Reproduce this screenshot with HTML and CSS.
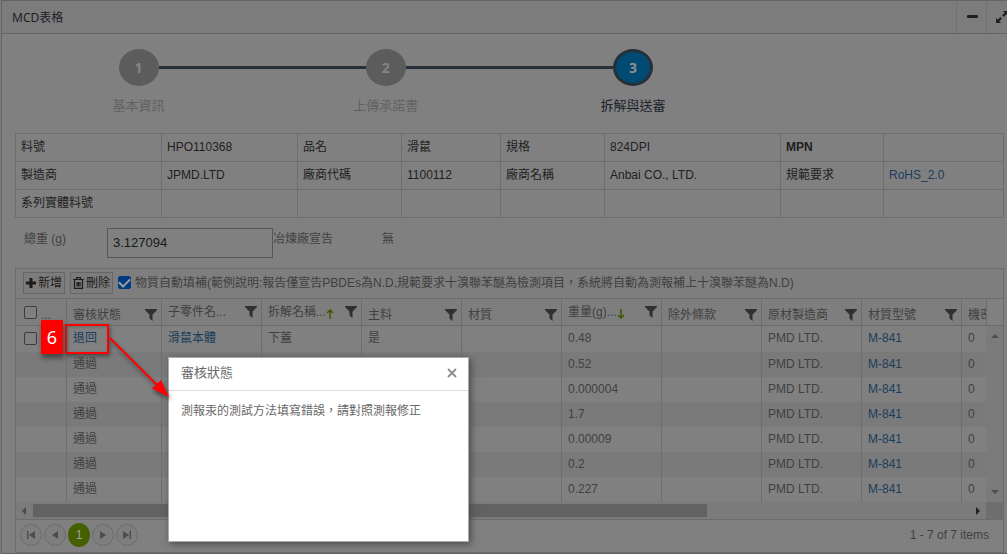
FILE: index.html
```html
<!DOCTYPE html>
<html lang="zh-Hant">
<head>
<meta charset="utf-8">
<title>MCD表格</title>
<link rel="stylesheet" href="styles.css">
</head>
<body>
<svg class="defs" width="0" height="0" aria-hidden="true">
  <symbol id="filter" viewBox="0 0 12 12"><path d="M0 0h12v1L7.500 5.500V12L4.500 9.500v-4L0 1z"/></symbol>
</svg>
<main class="panel">
  <header class="panel-head">
    <h1 class="panel-title">MCD表格</h1>
    <button class="tool" type="button" aria-label="收合"><svg width="12" height="12" viewBox="0 0 12 12"><rect x="1" y="4" width="11" height="3" rx="1"/></svg></button>
    <button class="tool" type="button" aria-label="展開"><svg width="12" height="12" viewBox="0 0 12 12"><path d="M7 0h5v5l-1.700-1.700L7.700 5.900 6.100 4.300l2.600-2.600zM0 12V7l1.700 1.700 2.600-2.600 1.600 1.600-2.600 2.600L5 12z"/></svg></button>
  </header>
  <div class="content">
    <ol class="steps">
      <li class="step"><span class="dot">1</span><span class="step-name">基本資訊</span></li>
      <li class="step"><span class="dot">2</span><span class="step-name">上傳承諾書</span></li>
      <li class="step current"><span class="dot">3</span><span class="step-name">拆解與送審</span></li>
    </ol>
    <table class="info">
      <colgroup><col class="i1"><col class="i2"><col class="i3"><col class="i4"><col class="i5"><col class="i6"><col class="i7"><col class="i8"></colgroup>
      <tr><th>料號</th><td>HPO110368</td><th>品名</th><td>滑鼠</td><th>規格</th><td>824DPI</td><th class="strong">MPN</th><td></td></tr>
      <tr><th>製造商</th><td>JPMD.LTD</td><th>廠商代碼</th><td>1100112</td><th>廠商名稱</th><td>Anbai CO., LTD.</td><th>規範要求</th><td><a href="#">RoHS_2.0</a></td></tr>
      <tr><th>系列實體料號</th><td></td><td></td><td></td><td></td><td></td><td></td><td></td></tr>
    </table>
    <div class="weight">
      <label class="weight-label" for="weight">總重 (g)</label>
      <input class="weight-input" id="weight" type="text" value="3.127094">
      <span class="smelter">冶煉廠宣告</span>
      <span class="smelter-value">無</span>
    </div>
    <section class="grid">
      <div class="toolbar">
        <button class="btn" type="button"><svg width="10" height="10" viewBox="0 0 10 10"><path d="M3.500 0h3v3.500H10v3H6.500V10h-3V6.500H0v-3h3.500z"/></svg>新增</button>
        <button class="btn" type="button"><svg width="11" height="12" viewBox="0 0 11 12"><path d="M0 2.500h11M3.500 2V.7h4V2M1.500 3v8.300h8V3M4 5v4.500M5.500 5v4.500M7 5v4.500" fill="none" stroke="currentColor" stroke-width="1.200"/></svg>刪除</button>
        <input class="check" id="autofill" type="checkbox" checked>
        <label class="autofill" for="autofill">物質自動填補(範例說明:報告僅宣告PBDEs為N.D,規範要求十溴聯苯醚為檢測項目，系統將自動為測報補上十溴聯苯醚為N.D)</label>
      </div>
      <div class="viewport">
        <div class="clip">
          <table class="rows">
            <colgroup><col class="c-check"><col class="c-state"><col span="9" class="c-std"></colgroup>
            <thead>
              <tr>
                <th class="pick"><span class="cell"><input class="check" type="checkbox" aria-label="全選"><span class="dots">...</span></span></th>
                <th><span class="cell">審核狀態<svg class="funnel"><use href="#filter"/></svg></span></th>
                <th><span class="cell raised">子零件名...<svg class="funnel"><use href="#filter"/></svg></span></th>
                <th><span class="cell raised">拆解名稱...<svg class="sort" width="8" height="10" viewBox="0 0 8 10"><path d="M4 1v9M1 4l3-3 3 3"/></svg><svg class="funnel"><use href="#filter"/></svg></span></th>
                <th><span class="cell">主料<svg class="funnel"><use href="#filter"/></svg></span></th>
                <th><span class="cell">材質<svg class="funnel"><use href="#filter"/></svg></span></th>
                <th><span class="cell raised">重量(g)...<svg class="sort" width="8" height="10" viewBox="0 0 8 10"><path d="M4 0v9M1 6l3 3 3-3"/></svg><svg class="funnel"><use href="#filter"/></svg></span></th>
                <th><span class="cell">除外條款<svg class="funnel"><use href="#filter"/></svg></span></th>
                <th><span class="cell">原材製造商<svg class="funnel"><use href="#filter"/></svg></span></th>
                <th><span class="cell">材質型號<svg class="funnel"><use href="#filter"/></svg></span></th>
                <th><span class="cell">機密</span></th>
              </tr>
            </thead>
            <tbody>
              <tr><td class="pick"><input class="check" type="checkbox" aria-label="選取"></td><td><a href="#">退回</a></td><td><a href="#">滑鼠本體</a></td><td>下蓋</td><td>是</td><td></td><td>0.48</td><td></td><td>PMD LTD.</td><td><a href="#">M-841</a></td><td>0</td></tr>
              <tr><td></td><td>通過</td><td></td><td></td><td></td><td></td><td>0.52</td><td></td><td>PMD LTD.</td><td><a href="#">M-841</a></td><td>0</td></tr>
              <tr><td></td><td>通過</td><td></td><td></td><td></td><td></td><td>0.000004</td><td></td><td>PMD LTD.</td><td><a href="#">M-841</a></td><td>0</td></tr>
              <tr><td></td><td>通過</td><td></td><td></td><td></td><td></td><td>1.7</td><td></td><td>PMD LTD.</td><td><a href="#">M-841</a></td><td>0</td></tr>
              <tr><td></td><td>通過</td><td></td><td></td><td></td><td></td><td>0.00009</td><td></td><td>PMD LTD.</td><td><a href="#">M-841</a></td><td>0</td></tr>
              <tr><td></td><td>通過</td><td></td><td></td><td></td><td></td><td>0.2</td><td></td><td>PMD LTD.</td><td><a href="#">M-841</a></td><td>0</td></tr>
              <tr><td></td><td>通過</td><td></td><td></td><td></td><td></td><td>0.227</td><td></td><td>PMD LTD.</td><td><a href="#">M-841</a></td><td>0</td></tr>
            </tbody>
          </table>
        </div>
        <div class="vbar">
          <div class="vbar-top"></div>
          <div class="vbar-track">
            <svg width="8" height="4" viewBox="0 0 8 4"><path d="M0 4l4-4 4 4z"/></svg>
            <svg width="8" height="4" viewBox="0 0 8 4"><path d="M0 0l4 4 4-4z"/></svg>
          </div>
        </div>
        <div class="hbar">
          <svg width="4" height="8" viewBox="0 0 4 8"><path d="M4 0L0 4l4 4z"/></svg>
          <div class="hbar-track"><div class="thumb"></div></div>
          <svg class="dark" width="4" height="8" viewBox="0 0 4 8"><path d="M0 0l4 4-4 4z"/></svg>
        </div>
        <div class="corner"></div>
      </div>
      <footer class="pager">
        <button class="page" type="button" aria-label="第一頁"><svg width="8" height="8" viewBox="0 0 8 8"><path d="M0 0h1.500v8H0zM8 0v8L2 4z"/></svg></button>
        <button class="page" type="button" aria-label="上一頁"><svg width="8" height="8" viewBox="0 0 8 8"><path d="M7 0v8L1 4z"/></svg></button>
        <button class="page active" type="button">1</button>
        <button class="page" type="button" aria-label="下一頁"><svg width="8" height="8" viewBox="0 0 8 8"><path d="M1 0v8l6-4z"/></svg></button>
        <button class="page" type="button" aria-label="最後一頁"><svg width="8" height="8" viewBox="0 0 8 8"><path d="M6.500 0H8v8H6.500zM0 0v8l6-4z"/></svg></button>
        <span class="count">1 - 7 of 7 items</span>
      </footer>
    </section>
  </div>
</main>
<section class="modal" role="dialog" aria-labelledby="modal-title">
  <header class="modal-head">
    <h2 class="modal-title" id="modal-title">審核狀態</h2>
    <button class="close" type="button" aria-label="關閉"><svg width="10" height="10" viewBox="0 0 10 10"><path d="M1 1l8 8M9 1L1 9"/></svg></button>
  </header>
  <p class="modal-text">測報汞的測試方法填寫錯誤，請對照測報修正</p>
</section>
<div class="mark-box"></div>
<div class="mark-number">6</div>
<svg class="mark-arrow" width="70" height="70" viewBox="0 0 70 70"><path d="M4 6L52 54" fill="none" stroke="#f00" stroke-width="2"/><path d="M63 65L46 56.500 55 48z" fill="#f00"/></svg>
</body>
</html>
```
FILE: styles.css
```css
* { box-sizing: border-box; }
body {
  margin: 0;
  height: 100vh;
  overflow: hidden;
  background: #7c7c7c;
  color: #404040;
  font: 12px/16px "Liberation Sans", "Noto Sans CJK TC", sans-serif;
}
a { color: #1a3d5c; text-decoration: none; }
button, input { font: inherit; color: inherit; margin: 0; }
svg { flex: none; fill: currentColor; }
.defs { position: absolute; }

.panel {
  margin: 0 -10px 0 1px;
  min-height: 100vh;
  border: 1px solid #646464;
  background: #808080;
}
.panel-head {
  display: flex;
  height: 33px;
  border-bottom: 1px solid #646464;
  background: #7c7c7c;
  color: #1c2024;
}
.panel-title {
  flex: 1;
  margin: 0;
  padding-left: 10px;
  font: 12px/34px "Noto Sans", "Noto Sans CJK TC", sans-serif;
}
.tool {
  width: 30px;
  padding: 0;
  border: 0;
  border-left: 1px solid #727272;
  background: none;
  display: flex;
  align-items: center;
  justify-content: center;
}
.content { padding: 15px 12px 0 13px; }

.steps {
  display: grid;
  grid-template-columns: repeat(4, 1fr);
  margin: 0 0 19px;
  padding: 0;
  list-style: none;
}
.step {
  display: grid;
  grid-template-columns: 1fr 40px 1fr;
  align-items: center;
  row-gap: 12px;
  color: #626262;
}
.step::before, .step::after { content: ""; height: 3px; background: #272f38; grid-row: 1; }
.step::before { grid-column: 1; }
.step::after { grid-column: 3; }
.step:first-child::before, .current::after { visibility: hidden; }
.dot {
  grid-area: 1 / 2;
  height: 37px;
  border-radius: 50%;
  background: #5c5c5c;
  color: #858585;
  font: bold 14px/37px "Open Sans", sans-serif;
  text-align: center;
}
.step-name {
  grid-area: 2 / 1 / 3 / 4;
  text-align: center;
  font-size: 13px;
}
.current { color: #1c232c; }
.current .dot { border: 3px solid #272f38; background: #004a74; color: #909090; line-height: 31px; }

.info { width: 100%; border-collapse: collapse; table-layout: fixed; color: #202020; }
.info th, .info td {
  height: 28px;
  padding: 0 5px 2px;
  border: 1px solid #6e6e6e;
  text-align: left;
  font-weight: normal;
}
.info .strong { font-weight: bold; }
.i1 { width: 146px; }
.i2 { width: 136px; }
.i3 { width: 104px; }
.i4 { width: 99px; }
.i5 { width: 104px; }
.i6 { width: 176px; }
.i7 { width: 103px; }

.weight { display: flex; padding: 10px 0 10px 9px; }
.weight-label { width: 83px; padding-top: 3px; }
.weight-input {
  width: 166px;
  height: 30px;
  padding: 0 5px 2px;
  border: 1px solid #565656;
  background: #808080;
  color: #181818;
  font-size: 13px;
}
.smelter { width: 109px; padding-top: 3px; }
.smelter-value { padding-top: 3px; }

.grid { border: 1px solid #6c6c6c; }
.toolbar { display: flex; height: 29px; padding: 0 7px 2px; align-items: center; background: #7e7e7e; }
.btn {
  display: flex;
  align-items: center;
  gap: 2px;
  height: 22px;
  margin-right: 5px;
  padding: 0 2px;
  border: 1px solid #666;
  background: #7c7c7c;
  color: #1c1c1c;
}
.check {
  appearance: none;
  flex: none;
  width: 13px;
  height: 13px;
  border: 1px solid #3c3c3c;
  border-radius: 2px;
  background: #808080;
}
.check:checked {
  border-color: #003b80;
  background: #003b80;
  display: grid;
  place-items: center;
}
.check:checked::before {
  content: "";
  width: 9px;
  height: 5px;
  margin-bottom: 3px;
  border: solid #a0a0a0;
  border-width: 0 0 2px 2px;
  rotate: -45deg;
}
.autofill { padding-left: 4px; white-space: nowrap; }

.viewport { display: grid; grid-template-columns: minmax(0, 1fr) 17px; }
.clip { overflow: hidden; border-top: 1px solid #6c6c6c; }
.rows { width: 1046px; table-layout: fixed; border-collapse: separate; border-spacing: 0; }
.c-check { width: 51px; }
.c-state { width: 95px; }
.c-std { width: 100px; }
.rows th {
  height: 27px;
  padding: 0 4px 0 6px;
  border-right: 1px solid #6c6c6c;
  border-bottom: 1px solid #6c6c6c;
  background: #7e7e7e;
  font-weight: normal;
  text-align: left;
  white-space: nowrap;
}
.rows td { height: 25px; padding: 0 6px 1px; border-right: 1px solid #6e6e6e; line-height: 16px; }
.rows tbody tr:first-child td { height: 26px; padding-bottom: 2px; }
.rows tbody tr:nth-child(even) { background: #7a7a7a; }
.rows .pick { padding: 0 8px; }
.rows td .check { display: block; }
.cell { display: flex; align-items: center; padding-top: 5px; }
.raised { padding: 0; }
.pick .cell { padding: 0; gap: 4px; }
.dots { padding-top: 6px; }
.funnel { width: 12px; height: 12px; margin-left: auto; color: #303030; }
.sort { margin-top: 4px; fill: none; stroke: #3f5700; stroke-width: 1.500; }

.vbar { display: flex; flex-direction: column; border-top: 1px solid #6c6c6c; }
.vbar-top { height: 27px; border-left: 1px solid #6c6c6c; border-bottom: 1px solid #6c6c6c; }
.vbar-track {
  flex: 1;
  display: flex;
  flex-direction: column;
  justify-content: space-between;
  align-items: center;
  padding: 8px 0;
  background: #7b7b7b;
  color: #505050;
}
.hbar { display: flex; align-items: center; gap: 7px; height: 17px; padding: 0 6px; background: #7b7b7b; color: #484848; }
.hbar-track { flex: 1; }
.thumb { width: 72%; height: 13px; background: #626262; }
.dark { color: #202020; }
.corner { background: #6e6e6e; }

.pager { display: flex; align-items: center; gap: 2px; height: 33px; padding: 0 14px 2px 4px; border-top: 1px solid #6c6c6c; }
.page {
  display: flex;
  align-items: center;
  justify-content: center;
  width: 22px;
  height: 22px;
  padding: 0;
  border: 1px solid #6c6c6c;
  border-radius: 50%;
  background: #7e7e7e;
  color: #4c4c4c;
}
.page.active { height: 24px; border: 0; background: #456000; color: #a0a0a0; }
.count { margin-left: auto; }

.modal {
  position: absolute;
  left: 168px;
  top: 357px;
  width: 301px;
  height: 185px;
  border: 1px solid #aaa;
  background: #fff;
  box-shadow: 2px 2px 7px #4a4a4a;
  color: #686868;
}
.modal-head { display: flex; align-items: center; height: 33px; padding: 0 11px 2px 12px; border-bottom: 1px solid #ddd; }
.modal-title { flex: 1; margin: 0; font-size: 13px; font-weight: normal; }
.close { display: flex; padding: 0; border: 0; background: none; }
.close svg { stroke: #909090; stroke-width: 2; }
.modal-text { margin: 0; padding: 12px; }

.mark-box {
  position: absolute;
  left: 65px;
  top: 324px;
  width: 44px;
  height: 30px;
  border: 2px solid #f00;
  box-shadow: 1px 2px 4px #444, inset 1px 1px 3px #666;
}
.mark-number {
  position: absolute;
  left: 41px;
  top: 320px;
  width: 22px;
  height: 34px;
  background: #f00;
  box-shadow: 1px 4px 5px #444;
  color: #fff;
  font: 18px/34px "Noto Sans", sans-serif;
  text-align: center;
}
.mark-arrow { position: absolute; left: 106px; top: 332px; filter: drop-shadow(1px 3px 2px #444); }
```
